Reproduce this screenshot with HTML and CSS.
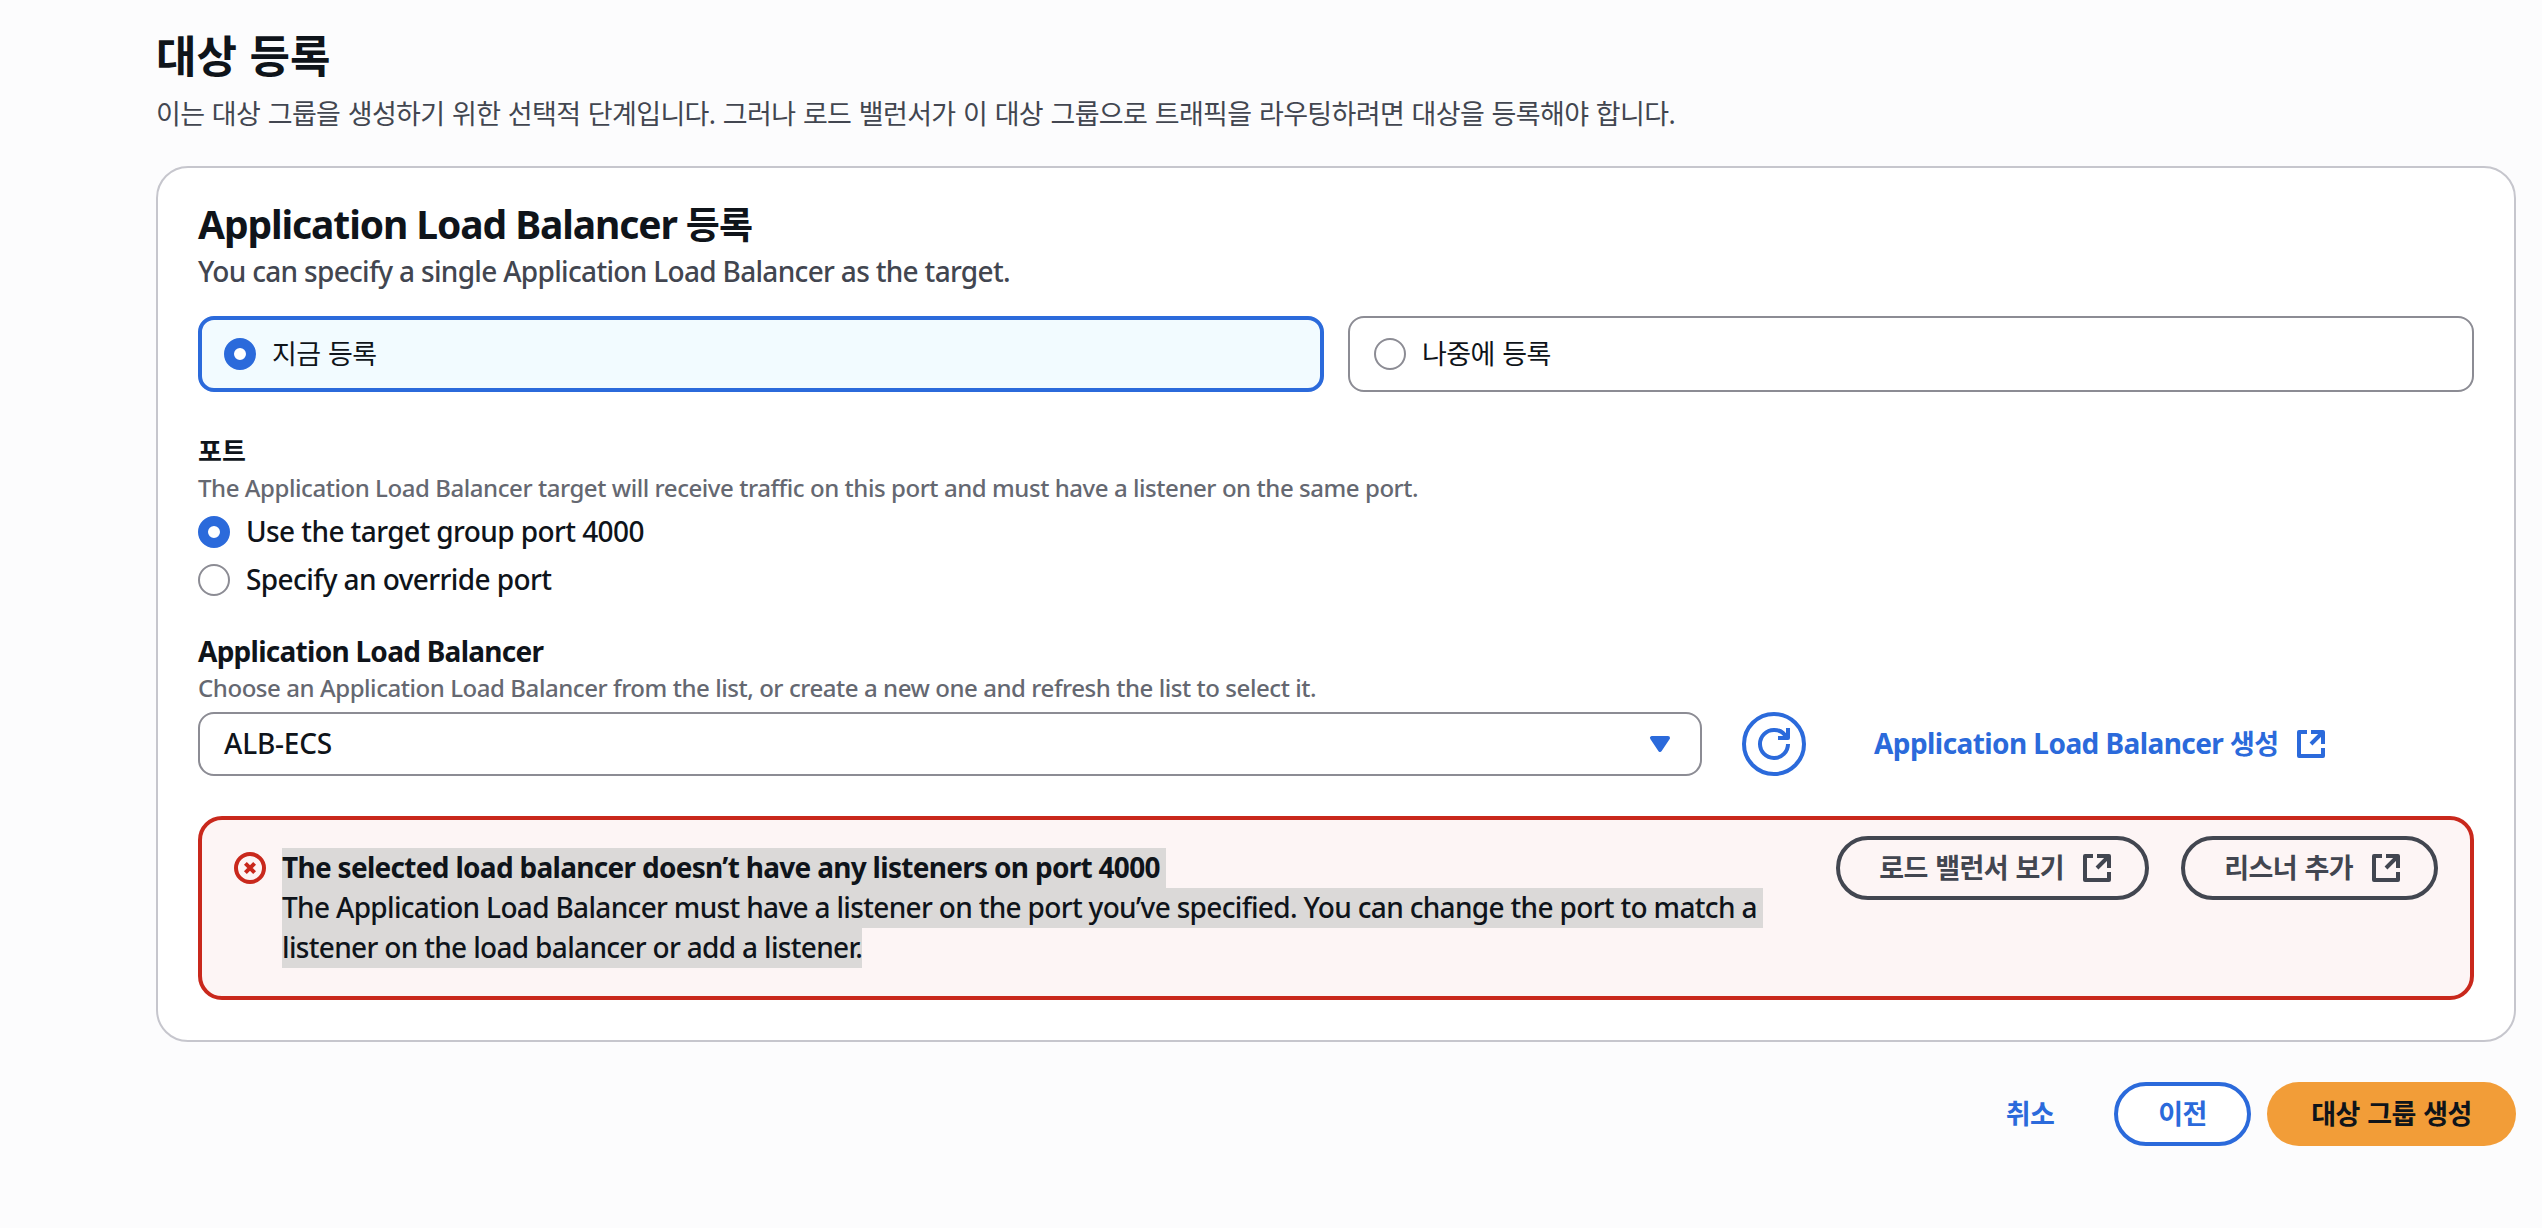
FILE: index.html
```html
<!DOCTYPE html>
<html lang="ko">
<head>
<meta charset="utf-8">
<title>대상 등록</title>
<link rel="stylesheet" href="styles.css">
</head>
<body>
<svg class="defs" aria-hidden="true">
  <symbol id="external" viewBox="0 0 16 16">
    <path d="M6 2H2v12h12v-4M8 2h6v6M14 2 8 8" />
  </symbol>
</svg>
<main class="page">
  <header class="page-header">
    <h1 class="page-title">대상 등록</h1>
    <p class="page-description">이는 대상 그룹을 생성하기 위한 선택적 단계입니다. 그러나 로드 밸런서가 이 대상 그룹으로 트래픽을 라우팅하려면 대상을 등록해야 합니다.</p>
  </header>

  <section class="panel">
    <h2 class="panel-title">Application Load Balancer <span class="panel-title-ko">등록</span></h2>
    <p class="panel-description">You can specify a single Application Load Balancer as the target.</p>

    <div class="tiles">
      <label class="tile tile-selected"><span class="radio radio-checked"></span><span class="ko">지금 등록</span></label>
      <label class="tile"><span class="radio"></span><span class="ko">나중에 등록</span></label>
    </div>

    <div class="field port-field">
      <div class="label label-ko">포트</div>
      <div class="hint">The Application Load Balancer target will receive traffic on this port and must have a listener on the same port.</div>
      <label class="option"><span class="radio radio-checked"></span><span class="option-text">Use the target group port 4000</span></label>
      <label class="option"><span class="radio"></span><span class="option-text">Specify an override port</span></label>
    </div>

    <div class="field alb-field">
      <div class="label">Application Load Balancer</div>
      <div class="hint">Choose an Application Load Balancer from the list, or create a new one and refresh the list to select it.</div>
      <div class="select-row">
        <div class="select"><span class="select-value">ALB-ECS</span>
          <svg class="caret" viewBox="0 0 16 16"><path d="M4 5h8l-4 6z" /></svg>
        </div>
        <button class="refresh" type="button" aria-label="refresh">
          <svg class="icon" viewBox="0 0 16 16"><path d="M10 5h5V0" /><path d="M15 8a6.957 6.957 0 0 1-7 7 6.957 6.957 0 0 1-7-7 6.957 6.957 0 0 1 7-7 6.87 6.87 0 0 1 6.3 4" /></svg>
        </button>
        <a class="create-link"><span class="link-text">Application Load Balancer <span class="ko">생성</span></span><svg class="icon"><use href="#external" /></svg></a>
      </div>
    </div>

    <div class="alert">
      <svg class="icon alert-icon" viewBox="0 0 16 16"><circle cx="8" cy="8" r="7" /><path d="m10.300 5.700-4.600 4.600M10.300 10.300 5.700 5.700" /></svg>
      <div class="alert-body">
        <div class="alert-line alert-title"><mark>The selected load balancer doesn’t have any listeners on port 4000 </mark></div>
        <div class="alert-line"><mark>The Application Load Balancer must have a listener on the port you’ve specified. You can change the port to match a </mark></div>
        <div class="alert-line"><mark>listener on the load balancer or add a listener.</mark></div>
      </div>
      <div class="alert-actions">
        <button class="button neutral view" type="button"><span>로드 밸런서 보기</span><svg class="icon"><use href="#external" /></svg></button>
        <button class="button neutral add" type="button"><span>리스너 추가</span><svg class="icon"><use href="#external" /></svg></button>
      </div>
    </div>
  </section>

  <footer class="actions">
    <button class="button cancel" type="button">취소</button>
    <button class="button previous" type="button">이전</button>
    <button class="button primary" type="button">대상 그룹 생성</button>
  </footer>
</main>
</body>
</html>
```
FILE: styles.css
```css
* { box-sizing: border-box; }

body {
  margin: 0;
  min-height: 1228px;
  background: #fcfcfd;
  color: #0f141a;
  font-family: "Noto Sans", "Noto Sans CJK KR", sans-serif;
  font-size: 28px;
  font-weight: 500;
  line-height: 40px;
}

h1, h2, p { margin: 0; }
.defs { display: none; }
.ko { font-size: 27px; letter-spacing: -0.6px; word-spacing: 1.1px; }

.page { padding: 32px 26px 0 156px; }

.page-title { height: 48px; font-size: 44px; line-height: 48px; font-weight: 700; letter-spacing: -0.1px; word-spacing: 1.5px; white-space: nowrap; }
.page-description {
  height: 40px;
  margin-top: 14px;
  color: #424650;
  font-size: 27px;
  font-weight: 400;
  letter-spacing: -0.65px;
  word-spacing: 1.1px;
  white-space: nowrap;
}

.panel {
  margin-top: 32px;
  height: 876px;
  padding: 36px 40px 0;
  border: 2px solid #c6c6cd;
  border-radius: 32px;
  background: #fff;
}
.panel-title { height: 44px; font-size: 39px; line-height: 40px; font-weight: 700; letter-spacing: -1.1px; white-space: nowrap; }
.panel-title-ko { font-size: 37px; letter-spacing: -0.8px; }
.panel-description { height: 40px; margin-top: 4px; line-height: 38px; color: #424650; letter-spacing: -0.68px; white-space: nowrap; }

.tiles { display: grid; grid-template-columns: 1fr 1fr; gap: 24px; margin-top: 24px; }
.tile {
  display: flex;
  align-items: center;
  gap: 16px;
  height: 76px;
  padding: 0 24px;
  border: 2px solid #8c8c94;
  border-radius: 16px;
  font-weight: 400;
}
.tile-selected { border: 4px solid #2b6adb; background: #f2fbff; padding: 0 22px; }

.radio { flex: none; width: 32px; height: 32px; border: 2px solid #8c8c94; border-radius: 50%; background: #fff; }
.radio-checked { border: 10px solid #2b6adb; }

.label { height: 40px; line-height: 38px; font-weight: 700; letter-spacing: -0.73px; }
.label-ko { font-size: 26px; letter-spacing: 0; }
.hint { height: 32px; color: #656871; font-size: 24px; line-height: 32px; letter-spacing: -0.44px; white-space: nowrap; }
.port-field { margin-top: 40px; }
.alb-field { margin-top: 32px; }
.option { display: flex; align-items: center; gap: 16px; height: 40px; margin-top: 8px; letter-spacing: -0.58px; }
.option-text, .select-value, .link-text { padding-bottom: 2px; }

.select-row { display: flex; align-items: center; margin-top: 8px; }
.select {
  display: flex;
  align-items: center;
  justify-content: space-between;
  width: 1504px;
  height: 64px;
  padding: 0 24px;
  border: 2px solid #8c8c94;
  border-radius: 16px;
  letter-spacing: -0.2px;
}
.caret { width: 32px; height: 32px; fill: #2b6adb; stroke: #2b6adb; stroke-width: 2; stroke-linejoin: round; }

.icon { flex: none; width: 32px; height: 32px; fill: none; stroke: currentColor; stroke-width: 2; stroke-linejoin: round; }
.refresh {
  display: flex;
  align-items: center;
  justify-content: center;
  width: 64px;
  height: 64px;
  margin-left: 40px;
  padding: 0;
  border: 4px solid #2b6adb;
  border-radius: 50%;
  background: none;
  color: #2b6adb;
}
.create-link { display: flex; align-items: center; gap: 17px; margin-left: 68px; color: #2b6adb; font-weight: 700; letter-spacing: -0.57px; }

.alert {
  display: flex;
  align-items: flex-start;
  height: 184px;
  margin-top: 40px;
  padding: 16px 32px;
  border: 4px solid #c9281c;
  border-radius: 24px;
  background: #fdf5f5;
}
.alert-icon { margin-top: 16px; color: #c9281c; }
.alert-body { margin: 12px 0 0 16px; }
.alert-line { height: 40px; letter-spacing: -0.67px; white-space: pre; }
.alert-line mark { display: block; width: max-content; height: 40px; line-height: 38px; background: #dbd9d8; color: inherit; }
.alert-title { font-weight: 700; letter-spacing: -0.7px; }
.alert-actions { display: flex; gap: 32px; margin-left: auto; }

.button {
  display: flex;
  align-items: center;
  justify-content: center;
  height: 64px;
  padding: 0;
  border: 4px solid transparent;
  border-radius: 32px;
  background: none;
  font: inherit;
  font-size: 27px;
  font-weight: 700;
  letter-spacing: -0.6px;
  word-spacing: 1.1px;
}
.neutral { justify-content: flex-end; gap: 17px; padding-right: 32px; border-color: #424650; color: #424650; }
.view { width: 313px; }
.add { width: 257px; }

.actions { display: flex; justify-content: flex-end; margin-top: 40px; }
.cancel { width: 136px; color: #2b6adb; }
.previous { width: 137px; margin-left: 16px; border-color: #2b6adb; background: #fff; color: #2b6adb; }
.primary { width: 249px; margin-left: 16px; border: 0; background: #f29d38; color: #0f141a; }
```
